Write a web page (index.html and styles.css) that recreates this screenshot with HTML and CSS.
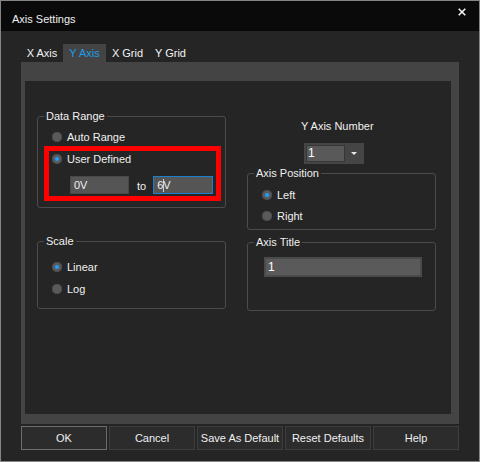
FILE: index.html
```html
<!DOCTYPE html>
<html>
<head>
<meta charset="utf-8">
<link rel="stylesheet" href="styles.css">
</head>
<body>
<div class="window">
  <div class="titlebar">
    <span class="title">Axis Settings</span>
    <svg class="close" width="8" height="8" viewBox="0 0 8 8"><path d="M0.7 0.7 L7.3 7.3 M7.3 0.7 L0.7 7.3" stroke="#f2f2f2" stroke-width="1.6" fill="none"/></svg>
  </div>
  <div class="body">
    <div class="tabs">
      <span class="tab">X Axis</span>
      <span class="tab active">Y Axis</span>
      <span class="tab">X Grid</span>
      <span class="tab">Y Grid</span>
    </div>
    <div class="panel">
      <div class="page">
        <div class="col">
          <fieldset class="group data-range">
            <legend>Data Range</legend>
            <div class="radio first"><span class="dot"></span><span>Auto Range</span></div>
            <div class="marked">
              <div class="radio"><span class="dot on"></span><span>User Defined</span></div>
              <div class="range">
                <span class="field">0V</span>
                <span class="to">to</span>
                <span class="field focus">6<span class="caret"></span>V</span>
              </div>
              <span class="highlight"></span>
            </div>
          </fieldset>
          <fieldset class="group scale">
            <legend>Scale</legend>
            <div class="radio first"><span class="dot on"></span><span>Linear</span></div>
            <div class="radio"><span class="dot"></span><span>Log</span></div>
          </fieldset>
        </div>
        <div class="col right">
          <div class="axis-number">
            <span class="label">Y Axis Number</span>
            <div class="combo"><span class="combo-edit">1</span><span class="arrow"></span></div>
          </div>
          <fieldset class="group axis-pos">
            <legend>Axis Position</legend>
            <div class="radio first"><span class="dot on"></span><span>Left</span></div>
            <div class="radio"><span class="dot"></span><span>Right</span></div>
          </fieldset>
          <fieldset class="group axis-title">
            <legend>Axis Title</legend>
            <div class="title-field">1</div>
          </fieldset>
        </div>
      </div>
    </div>
    <div class="buttons">
      <span class="btn default">OK</span>
      <span class="btn">Cancel</span>
      <span class="btn">Save As Default</span>
      <span class="btn">Reset Defaults</span>
      <span class="btn">Help</span>
    </div>
  </div>
</div>
</body>
</html>
```
FILE: styles.css
```css
* { box-sizing: border-box; }
html, body { margin: 0; padding: 0; background: #252525; }
body {
  font-family: "Liberation Sans", Arial, sans-serif;
  font-size: 11px;
  line-height: 13px;
  color: #f0f0f0;
}
.window {
  width: 480px;
  height: 462px;
  border: 1px solid #858585;
  background: #252525;
  display: flex;
  flex-direction: column;
}
.titlebar {
  height: 30px;
  background: #0a0a0a;
  display: flex;
  align-items: flex-start;
  flex-shrink: 0;
}
.title {
  margin: 12px 0 0 11px;
}
.close {
  margin: 7px 13px 0 auto;
  display: block;
}
.body {
  padding: 0 20px;
  display: flex;
  flex-direction: column;
}
.tabs {
  margin-top: 13px;
  height: 18px;
  display: flex;
}
.tab {
  height: 18px;
  display: flex;
  align-items: center;
  justify-content: center;
  color: #f4f4f4;
}
.tab:nth-child(1) { width: 42px; }
.tab:nth-child(2) { width: 43px; }
.tab:nth-child(3) { width: 43px; }
.tab:nth-child(4) { width: 43px; }
.tab.active {
  background: #444444;
  color: #1e9de9;
}
.panel {
  border-style: solid;
  border-color: #444444;
  border-width: 19px 8px 10px 4px;
  height: 362px;
}
.page {
  height: 100%;
  background: #252525;
  display: flex;
  align-items: flex-start;
  padding: 29px 0 0 12px;
  column-gap: 21px;
}
.col {
  width: 189px;
  display: flex;
  flex-direction: column;
}
.col.right { margin-top: 10px; }
.group {
  margin: 0;
  padding: 0 0 0 6px;
  border: 1px solid #4b4b4b;
  border-radius: 3px;
  min-width: 0;
  width: 189px;
}
.group legend {
  padding: 0 2px;
  height: 13px;
  line-height: 13px;
  color: #f0f0f0;
}
.data-range { height: 98px; }
.scale { height: 74px; margin-top: 27px; }
.axis-pos { height: 63px; margin-top: 3px; }
.axis-title { height: 75px; margin-top: 6px; }
.radio {
  height: 16px;
  margin: 6px 0 0 8px;
  display: flex;
  align-items: center;
  column-gap: 5px;
}
.data-range .radio.first { margin-top: 6px; }
.scale .radio.first { margin-top: 11px; }
.axis-pos .radio.first { margin-top: 7px; }
.axis-pos .radio + .radio { margin-top: 5px; }
.dot {
  width: 10px;
  height: 10px;
  border-radius: 50%;
  background: #5a5a5a;
  box-shadow: inset 0 0 0 1px #4c4c4c;
  display: flex;
  align-items: center;
  justify-content: center;
}
.dot.on::after {
  content: "";
  width: 4px;
  height: 4px;
  border-radius: 50%;
  background: #1aa0ff;
}
.marked {
  position: relative;
}
.range {
  margin: 9px 0 0 26px;
  display: flex;
  align-items: flex-end;
}
.field {
  width: 59px;
  height: 18px;
  background: #555555;
  border: 1px solid #484848;
  padding: 2px 0 0 3px;
  color: #f0f0f0;
  display: flex;
}
.field.focus {
  width: 60px;
  border-color: #1c80d0;
}
.caret {
  width: 1px;
  height: 13px;
  background: #cfcfcf;
  margin: 0 -1px 0 0;
}
.to {
  margin: 0 7px 1px 8px;
}
.highlight {
  position: absolute;
  left: 0;
  top: -5px;
  width: 177px;
  height: 55px;
  border: 5px solid #ff0000;
}
.axis-number {
  padding-left: 54px;
  display: flex;
  flex-direction: column;
  align-items: flex-start;
}
.combo {
  margin: 10px 0 0 3px;
  width: 60px;
  height: 21px;
  background: #454545;
  padding: 2px;
  display: flex;
  align-items: center;
}
.combo-edit {
  width: 39px;
  height: 17px;
  background: #595959;
  border: 1px solid #363636;
  padding: 1px 0 0 1px;
  font-size: 12px;
  color: #ffffff;
}
.arrow {
  margin-left: 6px;
  width: 0;
  height: 0;
  border-left: 3px solid transparent;
  border-right: 3px solid transparent;
  border-top: 3px solid #e8e8e8;
}
.title-field {
  margin: 8px 0 0 10px;
  width: 158px;
  height: 20px;
  background: #5a5a5a;
  border: 2px solid #4a4a4a;
  padding: 2px 0 0 2px;
  font-size: 12px;
  color: #ffffff;
}
.buttons {
  margin-top: 2px;
  display: flex;
  justify-content: space-between;
}
.btn {
  width: 86px;
  height: 24px;
  background: #2c2c2c;
  border: 1px solid #3e3e3e;
  display: flex;
  align-items: center;
  justify-content: center;
  color: #f0f0f0;
}
.btn.default {
  border-color: #6c6c6c;
}
```
